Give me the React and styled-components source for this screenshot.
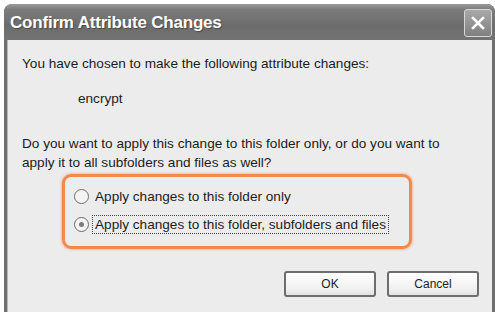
import React from 'react'
import styled, { createGlobalStyle } from 'styled-components'

const Global = createGlobalStyle`
  html, body { margin: 0; padding: 0; background: #ffffff; }
  body { font-family: "Liberation Sans", Arial, sans-serif; }
`

const Page = styled.div`
  width: 495px;
  height: 312px;
  overflow: hidden;
  padding: 4px 0 0 4px;
  box-sizing: border-box;
`

const Window = styled.div`
  width: 491px;
  height: 320px;
  display: flex;
  flex-direction: column;
  border-radius: 8px 8px 0 0;
  background: #6f6f6f;
  overflow: hidden;
  box-sizing: border-box;
  padding: 0 3px;
`

const TitleBar = styled.div`
  height: 36px;
  display: flex;
  align-items: center;
  justify-content: space-between;
  padding: 0 3px 0 6px;
  margin: 0 -3px;
  background: linear-gradient(#9a9a9a 0%, #7c7c7c 15%, #6c6c6c 60%, #737373 100%);
`

const Title = styled.span`
  color: #ffffff;
  font-weight: bold;
  font-size: 17px;
  letter-spacing: -0.2px;
  text-shadow: 1px 1px 1px rgba(0, 0, 0, 0.35);
  padding-top: 2px;
`

const CloseButton = styled.div`
  width: 26px;
  height: 26px;
  margin-top: 2px;
  border: 1px solid #d8d8d8;
  border-radius: 3px;
  background: linear-gradient(#a9a9a9, #7f7f7f);
  display: flex;
  align-items: center;
  justify-content: center;
`

const Body = styled.div`
  flex: 1;
  background: #ececec;
  border-left: 1px solid #b8b8b8;
  padding: 14px 0 0 14px;
  font-size: 13.6px;
  color: #1c1c1c;
`

const Line = styled.div`
  line-height: 19px;
  margin-left: ${p => p.$indent || 0}px;
  margin-bottom: ${p => p.$gap || 0}px;
`

const Highlight = styled.div`
  width: 335px;
  margin: 2px 0 0 40px;
  padding: 10px 0 12px 9px;
  border: 3px solid #f18a4f;
  border-radius: 9px;
  box-shadow: 0 0 2px 1px rgba(245, 160, 110, 0.6);
  display: flex;
  flex-direction: column;
  gap: 9px;
`

const Option = styled.label`
  display: flex;
  align-items: center;
  gap: 4px;
  height: 19px;
`

const Radio = styled.span`
  width: 13px;
  height: 13px;
  border-radius: 50%;
  border: 1px solid #6c6c6c;
  background: #f4f4f4;
  display: flex;
  align-items: center;
  justify-content: center;
  flex-shrink: 0;
  &::after {
    content: '';
    width: 5px;
    height: 5px;
    border-radius: 50%;
    background: ${p => (p.$checked ? '#7a7a7a' : 'transparent')};
  }
`

const OptionText = styled.span`
  padding: 1px 2px;
  border: 1px dotted ${p => (p.$focused ? '#444' : 'transparent')};
  margin-left: -1px;
`

const Buttons = styled.div`
  display: flex;
  justify-content: flex-end;
  gap: 11px;
  margin-top: 22px;
  padding-right: 13px;
`

const Button = styled.div`
  width: 88px;
  height: 22px;
  border: 2px solid #6d6d6d;
  border-radius: 3px;
  background: linear-gradient(#ffffff, #f1f1f1 70%, #e2e2e2);
  display: flex;
  align-items: center;
  justify-content: center;
  font-size: 12px;
  color: #222;
`

export default function App() {
  return (
    <Page>
      <Global />
      <Window>
        <TitleBar>
          <Title>Confirm Attribute Changes</Title>
          <CloseButton>
            <svg width="16" height="16" viewBox="0 0 16 16">
              <path d="M3 3 L13 13 M13 3 L3 13" stroke="#ffffff" strokeWidth="2.6" strokeLinecap="square" />
            </svg>
          </CloseButton>
        </TitleBar>
        <Body>
          <Line $gap={16}>You have chosen to make the following attribute changes:</Line>
          <Line $indent={56} $gap={26}>encrypt</Line>
          <Line>Do you want to apply this change to this folder only, or do you want to</Line>
          <Line>apply it to all subfolders and files as well?</Line>
          <Highlight>
            <Option>
              <Radio />
              <OptionText>Apply changes to this folder only</OptionText>
            </Option>
            <Option>
              <Radio $checked />
              <OptionText $focused>Apply changes to this folder, subfolders and files</OptionText>
            </Option>
          </Highlight>
          <Buttons>
            <Button>OK</Button>
            <Button>Cancel</Button>
          </Buttons>
        </Body>
      </Window>
    </Page>
  )
}
